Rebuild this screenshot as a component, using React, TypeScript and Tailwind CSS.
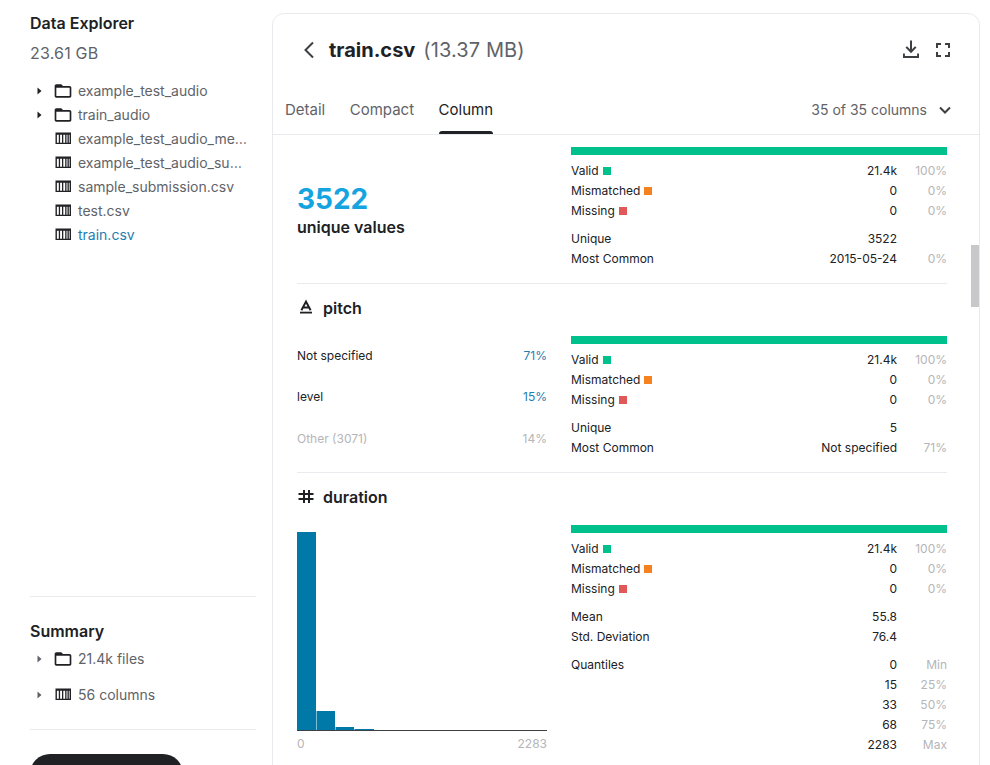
import React from "react";

const FolderIcon = () => (
  <svg className="w-5 h-5 shrink-0 text-[#202124]" viewBox="0 0 24 24" fill="currentColor">
    <path d="M20 6h-8l-2-2H4c-1.1 0-1.99.9-1.99 2L2 18c0 1.1.9 2 2 2h16c1.1 0 2-.9 2-2V8c0-1.1-.9-2-2-2zm0 12H4V8h16v10z" />
  </svg>
);

const TableIcon = () => (
  <svg className="w-5 h-5 shrink-0 text-[#202124]" viewBox="0 0 20 20" fill="currentColor">
    <path
      d="M2.5 3.5h15.5v11.5H2.5zM3.9 5.7v8.1h1.9v-8.1zM7.1 5.7v8.1h1.9v-8.1zM10.3 5.7v8.1h1.9v-8.1zM13.5 5.7v8.1h3.1v-8.1z"
      fillRule="evenodd"
    />
    <rect x="14.5" y="5" width="1.3" height="9.5" />
  </svg>
);

const Caret = ({ muted }: { muted?: boolean }) => (
  <svg className={`w-[5px] h-2 shrink-0 ${muted ? "text-[#5f6368]" : "text-[#202124]"}`} viewBox="0 0 5 8" fill="currentColor">
    <path d="M0.5 0.5 4.5 4 0.5 7.5z" />
  </svg>
);

const files = [
  { name: "example_test_audio", folder: true },
  { name: "train_audio", folder: true },
  { name: "example_test_audio_me…" },
  { name: "example_test_audio_su…" },
  { name: "sample_submission.csv" },
  { name: "test.csv" },
  { name: "train.csv", active: true },
];

// Label + coloured square, count, percent
const Row = ({ label, swatch, value, note }: { label?: string; swatch?: string; value: string; note?: string }) => (
  <div className="flex items-center h-5 text-xs text-[#202124]">
    <div className="flex-1 flex items-center gap-1">
      <span>{label}</span>
      {swatch === "green" && <span className="w-2 h-2 bg-[#00c08b]" />}
      {swatch === "orange" && <span className="w-2 h-2 bg-[#f5821f]" />}
      {swatch === "red" && <span className="w-2 h-2 bg-[#e05858]" />}
    </div>
    <span>{value}</span>
    <span className="w-[50px] text-right text-[#b5b5b8]">{note}</span>
  </div>
);

const Stats = ({ groups }: { groups: { label?: string; value: string; note?: string }[][] }) => (
  <div className="w-[376px] shrink-0">
    <div className="h-2 bg-[#00c08b] mb-1.5" />
    <Row label="Valid" swatch="green" value="21.4k" note="100%" />
    <Row label="Mismatched" swatch="orange" value="0" note="0%" />
    <Row label="Missing" swatch="red" value="0" note="0%" />
    {groups.map((group, i) => (
      <div key={i} className="mt-2">
        {group.map((r, j) => (
          <Row key={j} {...r} />
        ))}
      </div>
    ))}
  </div>
);

const bars = [
  { x: 0, w: 19, h: 198 },
  { x: 19.5, w: 18.5, h: 19 },
  { x: 38.5, w: 18.5, h: 3 },
  { x: 57.5, w: 19.5, h: 1 },
];

const Histogram = () => (
  <div className="w-[250px]">
    <svg className="block w-[250px] h-[200px]" viewBox="0 0 250 200">
      {bars.map((b) => (
        <rect key={b.x} x={b.x} y={199 - b.h} width={b.w} height={b.h} fill="#0079a8" />
      ))}
      <rect x="0" y="199" width="250" height="1" fill="#3c4043" />
    </svg>
    <div className="flex justify-between text-xs text-[#b5b5b8] mt-[5px]">
      <span>0</span>
      <span>2283</span>
    </div>
  </div>
);

export default function App() {
  return (
    <div className="flex h-[765px] overflow-hidden bg-white font-['Inter',sans-serif]">
      {/* Sidebar */}
      <aside className="w-[226px] ml-[30px] mr-4 shrink-0 flex flex-col">
        <h2 className="mt-[13px] text-base leading-5 font-semibold text-[#202124]">Data Explorer</h2>
        <div className="mt-2.5 text-base leading-5 tracking-[0.2px] text-[#5f6368]">23.61 GB</div>
        <ul className="mt-4">
          {files.map((f) => (
            <li key={f.name} className="flex items-center h-6 text-sm">
              <span className="w-[23px] pl-[7px] shrink-0">{f.folder && <Caret />}</span>
              {f.folder ? <FolderIcon /> : <TableIcon />}
              <span className={`ml-[5px] whitespace-nowrap ${f.active ? "text-[#1f7eb0]" : "text-[#5f6368]"}`}>{f.name}</span>
            </li>
          ))}
        </ul>
        <div className="mt-auto border-t border-[#e8eaed]">
          <h2 className="mt-6 text-base leading-5 font-semibold text-[#202124]">Summary</h2>
          <div className="mt-[6px] flex items-center h-6 text-sm text-[#5f6368]">
            <span className="w-[23px] pl-[7px]"><Caret muted /></span>
            <FolderIcon />
            <span className="ml-[5px]">21.4k files</span>
          </div>
          <div className="mt-3 flex items-center h-6 text-sm text-[#5f6368]">
            <span className="w-[23px] pl-[7px]"><Caret muted /></span>
            <TableIcon />
            <span className="ml-[5px]">56 columns</span>
          </div>
          <div className="mt-[22px] border-t border-[#e8eaed]" />
          <div className="mt-6 w-[153px] h-10 rounded-[20px] bg-[#202124] -mb-[29px]" />
        </div>
      </aside>

      {/* Main card */}
      <main className="relative mt-[13px] w-[708px] h-[800px] shrink-0 border border-[#e8eaed] rounded-t-xl">
        <header className="flex items-center h-[72px] pl-6 pr-[26px]">
          <svg className="w-6 h-6 text-[#3c4043]" viewBox="0 0 24 24" fill="none" stroke="currentColor" strokeWidth="2">
            <path d="M16 4.5 8.5 12l7.5 7.5" />
          </svg>
          <span className="ml-[8px] text-xl font-bold text-[#202124]">train.csv</span>
          <span className="ml-[8px] text-xl tracking-[0.1px] text-[#5f6368]">(13.37 MB)</span>
          <div className="ml-auto flex items-center gap-[10px]">
            <svg className="w-6 h-6 text-[#3c4043]" viewBox="0 0 24 24" fill="currentColor">
              <path d="M11 2.5h2v8.7l3-3 1.5 1.4L12 15.2 6.5 9.6 8 8.2l3 3z" />
              <path d="M4 15.5h1.9v2.4h12.2v-2.4H20v4.4H4z" />
            </svg>
            <svg className="w-5 h-5 text-[#3c4043]" viewBox="0 0 20 20" fill="none" stroke="currentColor" strokeWidth="2">
              <path d="M4 8V4h4M12 4h4v4M16 12v4h-4M8 16H4v-4" />
            </svg>
          </div>
        </header>

        <nav className="flex items-end h-[49px] pl-3 pr-[27px] border-b border-[#e8eaed]">
          <div className="flex gap-[24.5px] text-[15px]">
            <span className="h-[46px] leading-[44px] text-[#5f6368]">Detail</span>
            <span className="h-[46px] leading-[44px] text-[#5f6368]">Compact</span>
            <span className="relative h-[46px] leading-[44px] text-[#202124]">
              Column
              <span className="absolute left-0 right-0 bottom-0 h-[3px] rounded-t bg-[#202124]" />
            </span>
          </div>
          <div className="ml-auto h-[44px] mb-[2px] flex items-center text-sm text-[#5f6368]">
            35 of 35 columns
            <svg className="ml-[11px] w-[14px] h-[14px] text-[#3c4043]" viewBox="0 0 14 14" fill="none" stroke="currentColor" strokeWidth="2">
              <path d="M2 4.5 7 9.5 12 4.5" />
            </svg>
          </div>
        </nav>

        <div className="pl-6 pr-8 pt-3">
          {/* First column, scrolled part */}
          <section className="flex justify-between h-[137px] border-b border-[#e8eaed]">
            <div className="pt-[34px]">
              <div className="text-[28px] leading-9 font-bold text-[#16a4e0]">3522</div>
              <div className="text-base leading-5 font-semibold text-[#202124]">unique values</div>
            </div>
            <Stats
              groups={[[{ label: "Unique", value: "3522" }, { label: "Most Common", value: "2015-05-24", note: "0%" }]]}
            />
          </section>

          {/* pitch */}
          <section className="h-[189px] border-b border-[#e8eaed]">
            <h3 className="flex items-center h-12 mb-1 text-base font-semibold text-[#202124]">
              <svg className="w-[18px] h-[18px] text-[#202124]" viewBox="0 0 18 18" fill="none" stroke="currentColor">
                <path d="M4.4 11.2 9 2.6l4.6 8.6M6 8.6h6" strokeWidth="2" />
                <path d="M3 13.6h12" strokeWidth="1.8" />
              </svg>
              <span className="ml-2">pitch</span>
            </h3>
            <div className="flex justify-between">
              <div className="w-[250px] text-xs pt-[10px]">
                <div className="flex justify-between h-5 items-center text-[#202124]">
                  <span>Not specified</span>
                  <span className="text-[#1f7eb0]">71%</span>
                </div>
                <div className="flex justify-between h-5 items-center mt-[21px] text-[#202124]">
                  <span>level</span>
                  <span className="text-[#1f7eb0]">15%</span>
                </div>
                <div className="flex justify-between h-5 items-center mt-[22px] text-[#b5b5b8]">
                  <span>Other (3071)</span>
                  <span>14%</span>
                </div>
              </div>
              <Stats
                groups={[[{ label: "Unique", value: "5" }, { label: "Most Common", value: "Not specified", note: "71%" }]]}
              />
            </div>
          </section>

          {/* duration */}
          <section>
            <h3 className="flex items-center h-12 mb-1 text-base font-semibold text-[#202124]">
              <svg className="w-[18px] h-[18px] text-[#202124]" viewBox="0 0 18 18" fill="none" stroke="currentColor" strokeWidth="2">
                <path d="M7 2v13M12 2v13M1.5 6h15M1.5 11h15" />
              </svg>
              <span className="ml-2">duration</span>
            </h3>
            <div className="flex justify-between">
              <div className="pt-1.5">
                <Histogram />
              </div>
              <Stats
                groups={[
                  [{ label: "Mean", value: "55.8" }, { label: "Std. Deviation", value: "76.4" }],
                  [
                    { label: "Quantiles", value: "0", note: "Min" },
                    { value: "15", note: "25%" },
                    { value: "33", note: "50%" },
                    { value: "68", note: "75%" },
                    { value: "2283", note: "Max" },
                  ],
                ]}
              />
            </div>
          </section>
        </div>

        {/* Scrollbar thumb */}
        <div className="absolute right-0 top-[231px] w-2 h-[62px] bg-[#c8c8ca]" />
      </main>
    </div>
  );
}
